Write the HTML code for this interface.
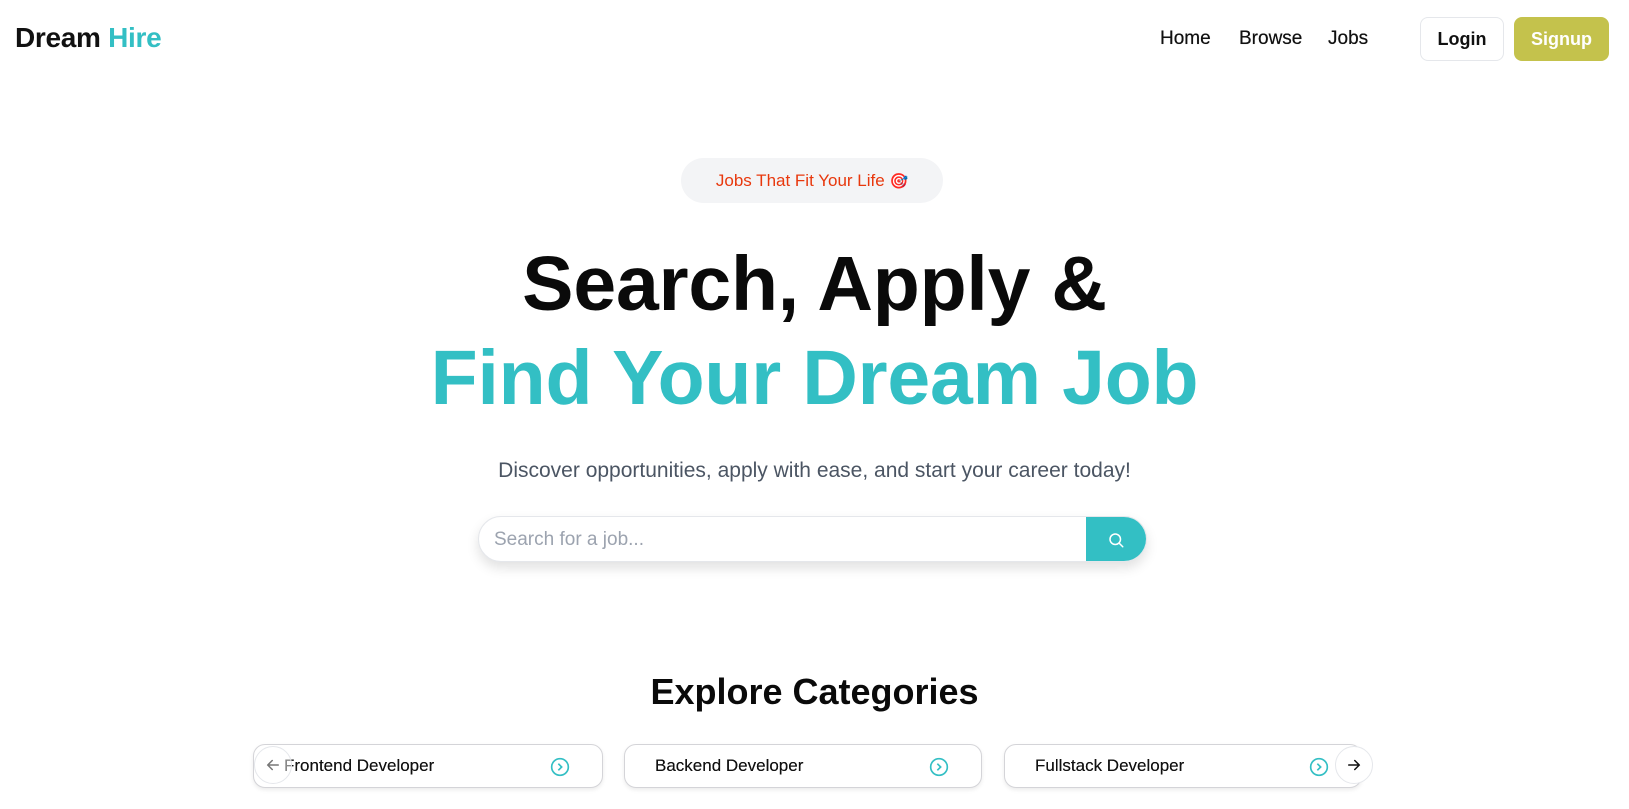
<!DOCTYPE html>
<html><head><meta charset="utf-8"><style>
*{margin:0;padding:0;box-sizing:border-box}
body{width:1629px;height:809px;overflow:hidden;background:#fff;font-family:"Liberation Sans",sans-serif;position:relative;color:#111}
.abs{position:absolute}
.logo{left:15px;top:22px;font-size:28px;font-weight:700;letter-spacing:-0.3px}
.logo span{color:#33bfc4}
.nav{top:28px;font-size:19px;color:#111;text-shadow:0 0 0.4px #111}
.btn{top:17px;height:44px;border-radius:8px;font-size:18px;font-weight:700;display:flex;align-items:center;justify-content:center}
.pill{left:681px;top:158px;width:262px;height:45px;border-radius:23px;background:#f3f4f6;color:#e8380d;font-size:17px;display:flex;align-items:center;justify-content:center}
.h{left:0;width:1629px;text-align:center;font-weight:700;font-size:77px;letter-spacing:-0.2px}
.sub{left:0;width:1629px;text-align:center;top:459px;font-size:21px;color:#4b5563}
.search{left:478px;top:516px;width:669px;height:46px;border:1px solid #e5e7eb;border-radius:23px;box-shadow:0 6px 12px rgba(0,0,0,.12);overflow:hidden;background:#fff}
.card{top:744px;height:44px;border:1px solid #d4d4d8;border-radius:12px;background:#fff;font-size:17px;display:flex;align-items:center;padding-left:30px;box-shadow:0 2px 4px rgba(0,0,0,.08);text-shadow:0 0 0.3px #111}
.ci{position:absolute;right:32px;top:12px}
.circ{width:38px;height:38px;border-radius:50%;background:#fff;border:1px solid #e5e7eb;display:flex;align-items:center;justify-content:center}
</style></head><body>
<div class="abs logo">Dream <span>Hire</span></div>
<div class="abs nav" style="left:1160px">Home</div>
<div class="abs nav" style="left:1239px">Browse</div>
<div class="abs nav" style="left:1328px">Jobs</div>
<div class="abs btn" style="left:1420px;width:84px;border:1px solid #e5e7eb;color:#111">Login</div>
<div class="abs btn" style="left:1514px;width:95px;background:#c4c24c;color:#fff">Signup</div>
<div class="abs pill">Jobs That Fit Your Life&nbsp;<span style="font-size:15px">🎯</span></div>
<div class="abs h" style="top:240px;color:#0a0a0a">Search, Apply &amp;</div>
<div class="abs h" style="top:334px;color:#33bfc4">Find Your Dream Job</div>
<div class="abs sub">Discover opportunities, apply with ease, and start your career today!</div>
<div class="abs search">
<div style="position:absolute;left:15px;top:12px;font-size:19px;color:#9ca3af">Search for a job...</div>
<div style="position:absolute;right:0;top:0;width:60px;height:46px;background:#33bfc4;display:flex;align-items:center;justify-content:center">
<svg width="18" height="18" viewBox="0 0 24 24" fill="none" stroke="#fff" stroke-width="2" stroke-linecap="round"><circle cx="11" cy="11" r="7"/><path d="M16.5 16.5L21 21"/></svg></div></div>
<div class="abs" style="left:0;width:1629px;text-align:center;top:671px;font-size:36px;font-weight:700;color:#0a0a0a">Explore Categories</div>
<div class="abs card" style="left:253px;width:350px">Frontend Developer<svg class="ci" width="20" height="20" viewBox="0 0 24 24" fill="none" stroke="#33bfc4" stroke-width="2"><circle cx="12" cy="12" r="10"/><path d="M10 8l4 4-4 4"/></svg></div>
<div class="abs card" style="left:624px;width:358px">Backend Developer<svg class="ci" width="20" height="20" viewBox="0 0 24 24" fill="none" stroke="#33bfc4" stroke-width="2"><circle cx="12" cy="12" r="10"/><path d="M10 8l4 4-4 4"/></svg></div>
<div class="abs card" style="left:1004px;width:358px">Fullstack Developer<svg class="ci" width="20" height="20" viewBox="0 0 24 24" fill="none" stroke="#33bfc4" stroke-width="2"><circle cx="12" cy="12" r="10"/><path d="M10 8l4 4-4 4"/></svg></div>
<div class="abs circ" style="left:254px;top:746px;background:rgba(255,255,255,.5)"><svg width="18" height="18" viewBox="0 0 24 24" fill="none" stroke="#777" stroke-width="2" stroke-linecap="round"><path d="M19 12H5M11 6l-6 6 6 6"/></svg></div>
<div class="abs circ" style="left:1335px;top:746px"><svg width="18" height="18" viewBox="0 0 24 24" fill="none" stroke="#111" stroke-width="2" stroke-linecap="round"><path d="M5 12h14M13 6l6 6-6 6"/></svg></div>
</body></html>
